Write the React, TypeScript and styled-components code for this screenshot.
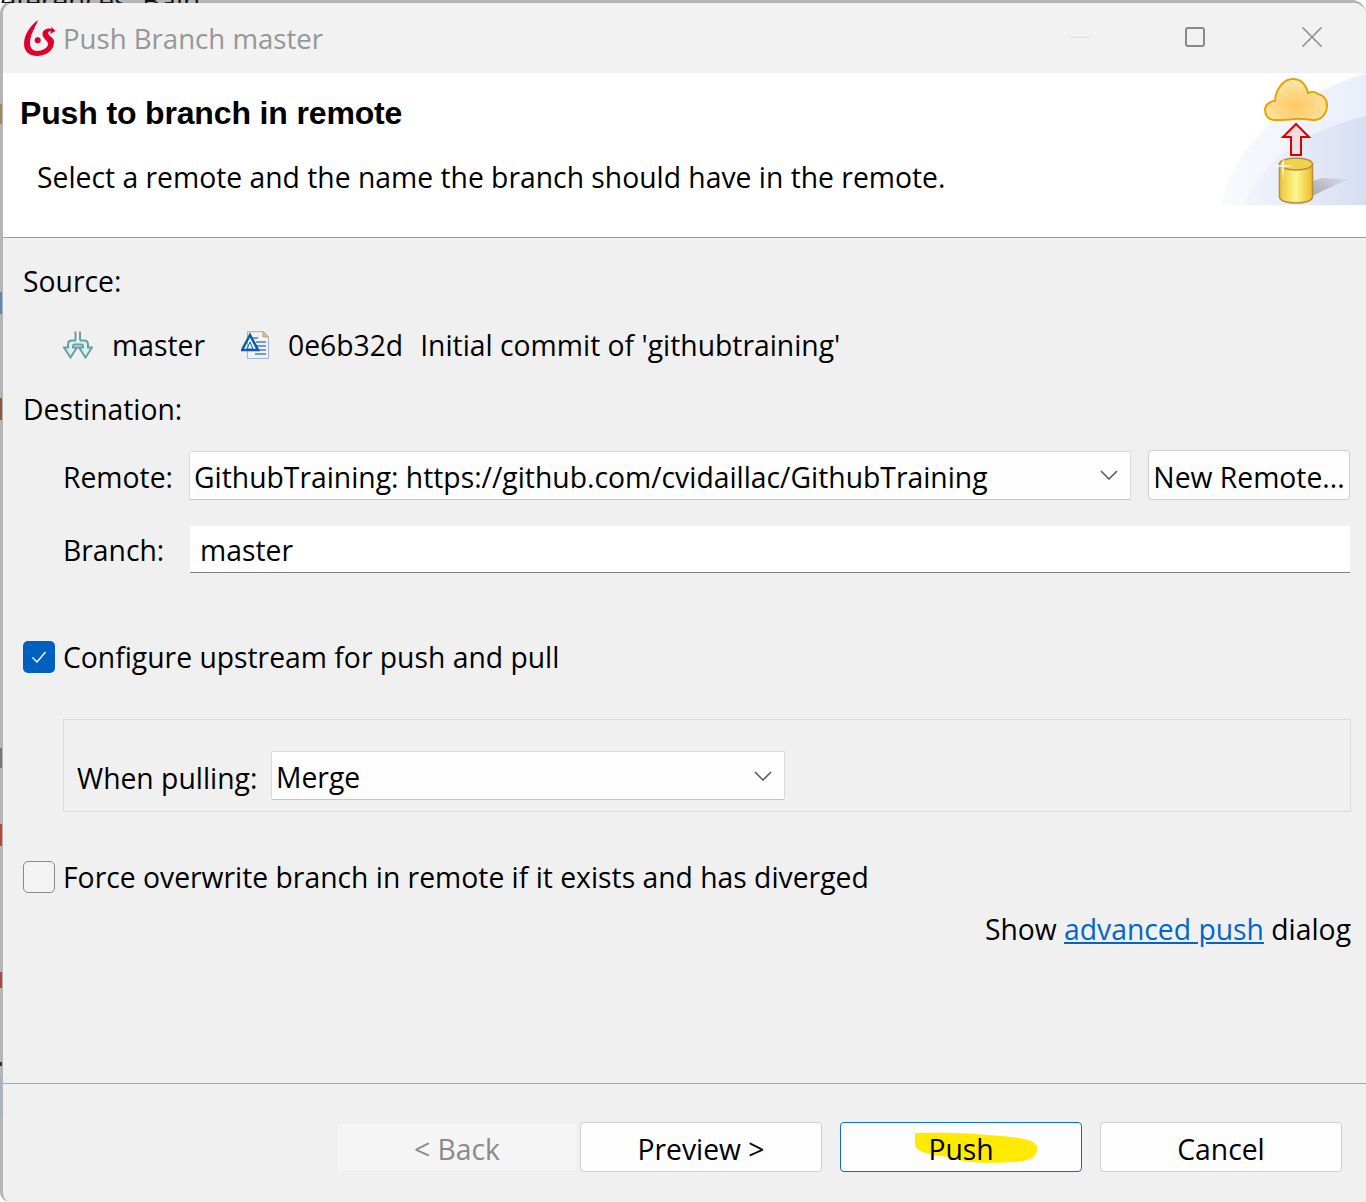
import React from 'react';
import styled, {createGlobalStyle} from 'styled-components';

const GlobalStyle = createGlobalStyle`
  html, body {
    margin: 0;
    padding: 0;
    background: #fff;
  }
  #root {
    width: 1366px;
    height: 1202px;
    overflow: hidden;
  }
`;

const UI_FONT = `"Open Sans", "Noto Sans", sans-serif`;

// bits of the windows behind the dialog, still visible along its left edge
const EDGE_BITS = [
  {top: 104, height: 20, color: '#a08a5a'},
  {top: 292, height: 22, color: '#5d86b0'},
  {top: 398, height: 22, color: '#8a5a40'},
  {top: 748, height: 20, color: '#777'},
  {top: 824, height: 22, color: '#b5493a'},
  {top: 972, height: 16, color: '#a84a3c'},
  {top: 1062, height: 4, color: '#333'},
  {top: 1077, height: 40, color: '#a9b2c0'},
];

export default function App(): JSX.Element {
  return (
    <Stage>
      <GlobalStyle />
      <Window>
        <TitleBar>
          <LogoIcon />
          <TitleText>Push Branch master</TitleText>
          <WindowControls>
            <ControlCell>
              <MinimizeMark />
            </ControlCell>
            <ControlCell>
              <MaximizeMark />
            </ControlCell>
            <ControlCell>
              <CloseIcon />
            </ControlCell>
          </WindowControls>
        </TitleBar>

        <Banner>
          <BannerText>
            <BannerTitle>Push to branch in remote</BannerTitle>
            <BannerHint>
              Select a remote and the name the branch should have in the remote.
            </BannerHint>
          </BannerText>
          <BannerArt />
        </Banner>

        <Body>
          <SectionLabel>Source:</SectionLabel>
          <SourceRow>
            <BranchIcon />
            <SourceName>master</SourceName>
            <CommitIcon />
            <CommitId>0e6b32d</CommitId>
            <span>Initial commit of 'githubtraining'</span>
          </SourceRow>

          <DestinationLabel>Destination:</DestinationLabel>
          <FieldRow $top={21}>
            <FieldLabel $nudge={4}>Remote:</FieldLabel>
            <Select $width={942}>
              <SelectValue>GithubTraining: https://github.com/cvidaillac/GithubTraining</SelectValue>
              <Chevron />
            </Select>
            <SideButton>New Remote...</SideButton>
          </FieldRow>
          <FieldRow $top={26}>
            <FieldLabel>Branch:</FieldLabel>
            <TextField>master</TextField>
          </FieldRow>

          <CheckRow $top={64}>
            <CheckBox $checked>
              <CheckMark />
            </CheckBox>
            Configure upstream for push and pull
          </CheckRow>

          <PullGroup>
            <PullLabel>When pulling:</PullLabel>
            <Select $width={514}>
              <SelectValue>Merge</SelectValue>
              <Chevron />
            </Select>
          </PullGroup>

          <CheckRow $top={45}>
            <CheckBox />
            Force overwrite branch in remote if it exists and has diverged
          </CheckRow>

          <AdvancedLine>
            Show <AdvancedLink>advanced push</AdvancedLink> dialog
          </AdvancedLine>
        </Body>

        <Footer>
          <FooterButton $disabled>&lt; Back</FooterButton>
          <FooterButton>Preview &gt;</FooterButton>
          <PushButton>
            <Highlight />
            <PushText>Push</PushText>
          </PushButton>
          <FooterButton>Cancel</FooterButton>
        </Footer>
      </Window>

      <BehindText>eferences  Bain</BehindText>
      {EDGE_BITS.map(bit => (
        <EdgeBit key={bit.top} $top={bit.top} $height={bit.height} $color={bit.color} />
      ))}
    </Stage>
  );
}

function LogoIcon(): JSX.Element {
  return (
    <LogoSvg viewBox="0 0 32 37">
      <path
        d="M14 0 C7 5 0 14 0 24 C0 32 6 36 13 36 C21 36 30 31 30 22 C30 17 25 17 24 13 C24.500 11 26 11 27 11.500 L26 14 L31.500 11 L27 6.500 L27.500 9 C23 7.500 18.500 10 18.500 14 C18.500 19 24 20 24 24 C24 28 18 31 13 31 C8 31 6 27 6 23 C6 15 11 8 14 0Z"
        fill="#e0002d"
      />
      <circle cx="13.700" cy="20.300" r="3" fill="#e0002d" />
    </LogoSvg>
  );
}

function CloseIcon(): JSX.Element {
  return (
    <svg width="20" height="20" viewBox="0 0 20 20">
      <path d="M0.500 0.500 L19.500 19.500 M19.500 0.500 L0.500 19.500" stroke="#8a8a8a" strokeWidth="1.500" fill="none" />
    </svg>
  );
}

function BannerArt(): JSX.Element {
  return (
    <BannerSvg viewBox="0 0 144 132">
      <defs>
        <linearGradient id="wash" x1="0" y1="0" x2="1" y2="0">
          <stop offset="0" stopColor="#f8fafe" />
          <stop offset="1" stopColor="#e9eefa" />
        </linearGradient>
        <linearGradient id="wash2" x1="0" y1="0" x2="1" y2="0">
          <stop offset="0" stopColor="#f3f5fc" />
          <stop offset="1" stopColor="#d6def3" />
        </linearGradient>
        <radialGradient id="cloud" cx="0.500" cy="0.650" r="0.600">
          <stop offset="0" stopColor="#fdc860" />
          <stop offset="1" stopColor="#fee6a8" />
        </radialGradient>
        <linearGradient id="arrow" x1="0" y1="0" x2="0" y2="1">
          <stop offset="0" stopColor="#f8d8d8" />
          <stop offset="1" stopColor="#f0e4e8" />
        </linearGradient>
        <linearGradient id="can" x1="0" y1="0" x2="1" y2="0">
          <stop offset="0" stopColor="#ecc63a" />
          <stop offset="0.500" stopColor="#fdf68c" />
          <stop offset="1" stopColor="#eebb2a" />
        </linearGradient>
        <linearGradient id="shadow" x1="0" y1="1" x2="1" y2="0">
          <stop offset="0" stopColor="#a9a9ad" />
          <stop offset="1" stopColor="#d6dbe9" />
        </linearGradient>
      </defs>
      <path d="M0 132 C6 84 52 30 144 0 L144 132Z" fill="url(#wash)" />
      <path d="M22 132 C40 88 80 58 144 43 L144 132Z" fill="url(#wash2)" />
      <path d="M90 123 L126 106 L100 105 L90 108Z" fill="url(#shadow)" />
      <path
        d="M53 47 C46 47 43 42 43 37 C43 32 48 28 53 28 C54 15 62 6 71 6 C79 6 84 12 86 20 C90 18 94 19 96 21 C101 22 105 26 105 32 C105 41 99 47 92 47 C85 47 80 45 72 46 C65 47 60 47 53 47Z"
        fill="url(#cloud)"
        stroke="#e8a200"
        strokeWidth="2"
      />
      <path
        d="M74 51 L61 64 L69 64 L69 82 L79 82 L79 64 L87 64Z"
        fill="url(#arrow)"
        stroke="#d90000"
        strokeWidth="2"
      />
      <path
        d="M57.500 91 L57.500 124 C57.500 128 66 130 74 130 C82 130 90.500 128 90.500 124 L90.500 91Z"
        fill="url(#can)"
        stroke="#b98d3e"
        strokeWidth="1.500"
      />
      <ellipse cx="74" cy="91" rx="16.500" ry="6" fill="#f1d250" stroke="#b98d3e" strokeWidth="1.500" />
      <path d="M61 83 L62 92 L72 93 L62 94 L61 106 L60 94 L50 93 L60 92Z" fill="#fffbe6" />
    </BannerSvg>
  );
}

function BranchIcon(): JSX.Element {
  return (
    <SourceIcon viewBox="0 0 30 27" $width={30}>
      <path d="M12.500 0 L12.500 9 M17 0 L17 9" stroke="#6b9ea2" strokeWidth="2" fill="none" />
      <path
        d="M13 9 L9 9 Q5 9 5 13 L5 16 L1 16 L7.500 26 L14 16 L10 16 L10 14.500 Q10 13 12 13 L18 13 Q20 13 20 14.500 L20 16 L16 16 L22.500 26 L29 16 L25 16 L25 13 Q25 9 21 9 L17 9"
        fill="#d8f1f4"
        stroke="#6b9ea2"
        strokeWidth="2"
      />
    </SourceIcon>
  );
}

function CommitIcon(): JSX.Element {
  return (
    <SourceIcon viewBox="0 0 28 28" $width={28}>
      <path d="M6.500 0.500 L22 0.500 L27.500 6 L27.500 27.500 L6.500 27.500Z" fill="#eef2fa" stroke="#a0b4d0" strokeWidth="1" />
      <path d="M6.500 0.500 L22 0.500" stroke="#c8b890" strokeWidth="1.500" />
      <path d="M22 0.500 L22 6 L27.500 6Z" fill="#d9c590" stroke="#b8a26a" strokeWidth="1" />
      <path d="M12 7 L17 7 M15 11 L25 11 M15 15 L25 15 M18 19 L25 19 M14 23 L25 23" stroke="#5a7cab" strokeWidth="1.500" />
      <path d="M9 4 L17 19 L1 19Z" fill="none" stroke="#0b5da8" strokeWidth="2.500" />
      <path d="M9 11 L12 18 L6 18Z" fill="#eef2fa" stroke="#0b5da8" strokeWidth="1" />
    </SourceIcon>
  );
}

function Chevron(): JSX.Element {
  return (
    <ChevronSvg viewBox="0 0 18 10">
      <path d="M1 1 L9 9 L17 1" stroke="#555" strokeWidth="1.500" fill="none" />
    </ChevronSvg>
  );
}

function CheckMark(): JSX.Element {
  return (
    <svg width="16" height="14" viewBox="0 0 16 14">
      <path d="M1.500 7.500 L6 12 L14.500 2" stroke="#fff" strokeWidth="1.500" fill="none" />
    </svg>
  );
}

function Highlight(): JSX.Element {
  return (
    <HighlightSvg viewBox="0 0 124 32">
      <path
        d="M1 1 C30 0 60 1 85 4 C105 5 122 8 123 15 C124 24 118 29 100 30 C70 32 45 30 36 25 C22 24 4 21 1 14Z"
        fill="#ffea00"
      />
    </HighlightSvg>
  );
}

const Stage = styled.div`
  position: relative;
  width: 1366px;
  height: 1202px;
  overflow: hidden;
`;

const BehindText = styled.div`
  position: absolute;
  left: 0;
  top: 0;
  width: 210px;
  height: 3px;
  overflow: hidden;
  font-family: ${UI_FONT};
  font-size: 28px;
  line-height: 0;
  white-space: pre;
  color: #111;
`;

const EdgeBit = styled.div<{$top: number; $height: number; $color: string}>`
  position: absolute;
  left: 0;
  top: ${p => p.$top}px;
  width: 2px;
  height: ${p => p.$height}px;
  background: ${p => p.$color};
`;

const Window = styled.div`
  width: 1366px;
  height: 1202px;
  box-sizing: border-box;
  border-left: 3px solid #b5b5b5;
  border-top: 3px solid #b5b5b5;
  border-top-left-radius: 14px;
  border-top-right-radius: 14px;
  border-bottom-left-radius: 10px;
  background: #f0f0f0;
  font-family: ${UI_FONT};
  font-size: 28.300px;
  color: #000;
  overflow: hidden;
`;

const TitleBar = styled.div`
  height: 70px;
  display: flex;
  align-items: center;
  background: #f2f2f2;
  padding-left: 21px;
`;

const LogoSvg = styled.svg`
  width: 32px;
  height: 37px;
  margin-right: 7px;
`;

const TitleText = styled.div`
  color: #969696;
  font-size: 27.600px;
`;

const WindowControls = styled.div`
  margin-left: auto;
  display: flex;
  gap: 81px;
  padding-right: 36px;
`;

const ControlCell = styled.div`
  width: 36px;
  height: 68px;
  padding-bottom: 2px;
  display: flex;
  align-items: center;
  justify-content: center;
`;

const MinimizeMark = styled.div`
  width: 20px;
  height: 1px;
  margin-left: 4px;
  background: #dcdcdc;
`;

const MaximizeMark = styled.div`
  width: 16px;
  height: 16px;
  border: 2px solid #8a8a8a;
  border-radius: 3px;
`;

const Banner = styled.div`
  height: 165px;
  box-sizing: border-box;
  display: flex;
  justify-content: space-between;
  background: #fff;
  border-bottom: 1px solid #a0a0a0;
`;

const BannerText = styled.div`
  padding: 20px 0 0 17px;
`;

const BannerTitle = styled.div`
  font-family: "Liberation Sans", Arial, sans-serif;
  font-weight: 700;
  font-size: 32px;
  line-height: 40px;
  letter-spacing: -0.150px;
`;

const BannerHint = styled.div`
  margin: 24px 0 0 17px;
  line-height: 40px;
`;

const BannerSvg = styled.svg`
  width: 144px;
  height: 132px;
  flex-shrink: 0;
`;

const Body = styled.div`
  height: 846px;
  box-sizing: border-box;
  padding: 23px 15px 0 20px;
  border-bottom: 1px solid #a6a6a6;
`;

const SectionLabel = styled.div`
  line-height: 40px;
`;

const DestinationLabel = styled(SectionLabel)`
  margin-top: 24px;
`;

const SourceRow = styled.div`
  display: flex;
  align-items: center;
  height: 40px;
  margin: 24px 0 0 40px;
`;

const SourceIcon = styled.svg<{$width: number}>`
  width: ${p => p.$width}px;
  height: 28px;
  flex-shrink: 0;
`;

const SourceName = styled.span`
  margin: 0 36px 0 19px;
`;

const CommitId = styled.span`
  margin: 0 17px 0 19px;
`;

const FieldRow = styled.div<{$top: number}>`
  display: flex;
  align-items: center;
  margin: ${p => p.$top}px 0 0 40px;
`;

const FieldLabel = styled.div<{$nudge?: number}>`
  width: 126px;
  flex-shrink: 0;
  padding-top: ${p => p.$nudge ?? 0}px;
`;

const Select = styled.div<{$width: number}>`
  width: ${p => p.$width}px;
  height: 49px;
  box-sizing: border-box;
  flex-shrink: 0;
  display: flex;
  align-items: center;
  justify-content: space-between;
  padding: 0 12px 0 4px;
  background: #fdfdfd;
  border: 1px solid #d9d9d9;
  border-bottom-color: #c4c4c4;
  border-radius: 2px;
`;

const SelectValue = styled.span`
  padding-top: 3px;
  white-space: nowrap;
`;

const ChevronSvg = styled.svg`
  width: 18px;
  height: 10px;
  flex-shrink: 0;
`;

const SideButton = styled.button`
  margin-left: 17px;
  width: 202px;
  height: 50px;
  padding: 3px 0 0;
  background: #fdfdfd;
  border: 1px solid #cfcfcf;
  border-radius: 4px;
  font: inherit;
  color: #000;
  white-space: nowrap;
`;

const TextField = styled.div`
  flex: 1;
  height: 47px;
  box-sizing: border-box;
  margin: 0 1px;
  padding-left: 10px;
  line-height: 48px;
  background: #fff;
  border-bottom: 1px solid #808080;
`;

const CheckRow = styled.div<{$top: number}>`
  display: flex;
  align-items: center;
  margin-top: ${p => p.$top}px;
  height: 40px;
`;

const CheckBox = styled.div<{$checked?: boolean}>`
  width: 32px;
  height: 32px;
  box-sizing: border-box;
  margin-right: 8px;
  display: flex;
  align-items: center;
  justify-content: center;
  border-radius: 5px;
  background: ${p => (p.$checked ? '#0060c0' : '#f3f3f3')};
  border: ${p => (p.$checked ? 'none' : '1.500px solid #8b8b8b')};
`;

const PullGroup = styled.div`
  height: 93px;
  box-sizing: border-box;
  margin: 42px 0 0 40px;
  padding: 31px 0 0 13px;
  display: flex;
  align-items: flex-start;
  border: 1px solid #dcdcdc;
`;

const PullLabel = styled.div`
  width: 194px;
  line-height: 54px;
  flex-shrink: 0;
`;

const AdvancedLine = styled.div`
  margin-top: 12px;
  line-height: 40px;
  text-align: right;
`;

const AdvancedLink = styled.span`
  color: #0066cc;
  text-decoration: underline;
`;

const Footer = styled.div`
  display: flex;
  padding: 38px 0 0 333px;
`;

const FooterButton = styled.button<{$disabled?: boolean}>`
  width: 242px;
  height: 50px;
  padding: 3px 0 0;
  margin-right: 18px;
  background: ${p => (p.$disabled ? '#f5f5f5' : '#fdfdfd')};
  border: 1px solid ${p => (p.$disabled ? '#ededed' : '#d0d0d0')};
  border-radius: 4px;
  font: inherit;
  color: ${p => (p.$disabled ? '#8a8a8a' : '#000')};

  &:first-child {
    margin-right: 2px;
  }
`;

const PushButton = styled(FooterButton)`
  position: relative;
  border: 1.500px solid #0a6fc4;
`;

const HighlightSvg = styled.svg`
  position: absolute;
  left: 73px;
  top: 9px;
  width: 124px;
  height: 32px;
`;

const PushText = styled.span`
  position: relative;
`;
